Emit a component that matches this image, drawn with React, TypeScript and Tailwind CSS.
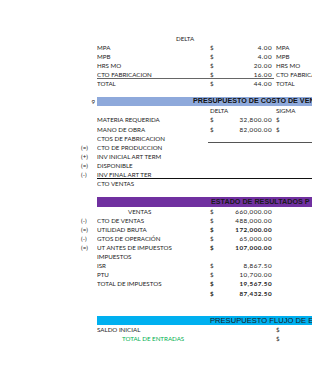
import React from "react";

type RowProps = {
  pre?: string;
  label?: React.ReactNode;
  cur?: string;
  num?: string;
  rest?: React.ReactNode;
  bold?: boolean;
  labelClass?: string;
  curClass?: string;
  numClass?: string;
  restClass?: string;
  preClass?: string;
};

const cell = "h-[9.12px] leading-[9.12px] whitespace-nowrap overflow-hidden";

const Row = ({
  pre,
  label,
  cur,
  num,
  rest,
  bold,
  labelClass = "",
  curClass = "",
  numClass = "",
  restClass = "",
  preClass = "pl-[81px]",
}: RowProps) => (
  <div className="grid grid-cols-[97px_111px_10px_56px_1fr]">
    <div className={`${cell} ${preClass}`}>{pre}</div>
    <div className={`${cell} ${labelClass}`}>{label}</div>
    <div className={`${cell} pl-[2px] ${bold ? "font-bold" : ""} ${curClass}`}>{cur}</div>
    <div
      className={`${cell} text-right pr-[2px] text-[6.3px] tracking-[0.45px] ${bold ? "font-bold" : ""} ${numClass}`}
    >
      {num}
    </div>
    <div className={`${cell} pl-[2px] ${restClass}`}>{rest}</div>
  </div>
);

const Blank = () => <div className="h-[9.12px]" />;

export default function App() {
  return (
    <div
      className="w-[312px] h-[380px] overflow-hidden bg-white text-[#1c1c1c] text-[6.2px] pt-[33.5px]"
      style={{ fontFamily: "Lato, 'Liberation Sans', sans-serif" }}
    >
      {/* costo de fabricacion */}
      <Row label={<span className="pl-[79px]">DELTA</span>} />
      <Row label="MPA" cur="$" num="4.00" rest="MPA" />
      <Row label="MPB" cur="$" num="4.00" rest="MPB" />
      <Row label="HRS MO" cur="$" num="20.00" rest="HRS MO" />
      <Row
        label="CTO FABRICACION"
        cur="$"
        num="16.00"
        rest="CTO FABRICA"
        labelClass="border-b border-[#666]"
        curClass="border-b border-[#666]"
        numClass="border-b border-[#666]"
      />
      <Row label="TOTAL" cur="$" num="44.00" rest="TOTAL" />
      <Blank />

      {/* costo de ventas */}
      <div className="grid grid-cols-[97px_1fr]">
        <div className={`${cell} text-right pr-[2px]`}>9</div>
        <div
          className={`${cell} bg-[#8ea9db] pl-[96px] font-bold text-[7.15px] text-[#111]`}
          style={{ fontFamily: "'Liberation Sans', Lato, sans-serif" }}
        >
          PRESUPUESTO DE COSTO DE VEN
        </div>
      </div>
      <Row cur="DELTA" curClass="overflow-visible" rest="SIGMA" />
      <Row label="MATERIA REQUERIDA" cur="$" num="32,800.00" rest="$" />
      <Row label="MANO DE OBRA" cur="$" num="82,000.00" rest="$" />
      <Row
        label="CTOS DE FABRICACION"
        curClass="border-b border-[#555]"
        numClass="border-b border-[#555]"
        restClass="border-b border-[#555]"
      />
      <Row pre="(=)" label="CTO DE PRODUCCION" />
      <Row pre="(+)" label="INV INICIAL ART TERM" />
      <Row pre="(=)" label="DISPONIBLE" />
      <Row
        pre="(-)"
        label="INV FINAL ART TER"
        labelClass="border-b border-[#111]"
        curClass="border-b border-[#111]"
        numClass="border-b border-[#111]"
        restClass="border-b border-[#111]"
      />
      <Row label="CTO VENTAS" />
      <Blank />

      {/* estado de resultados */}
      <div className="grid grid-cols-[97px_1fr]">
        <div className={cell} />
        <div
          className={`${cell} bg-[#7030a0] pl-[114px] font-bold text-[7.2px] text-[#1a1a1a]`}
          style={{ fontFamily: "'Liberation Sans', sans-serif" }}
        >
          ESTADO DE RESULTADOS P
        </div>
      </div>
      <Row label={<span className="pl-[31px]">VENTAS</span>} cur="$" num="660,000.00" />
      <Row pre="(-)" label="CTO DE VENTAS" cur="$" num="488,000.00" />
      <Row pre="(=)" label="UTILIDAD BRUTA" cur="$" num="172,000.00" bold />
      <Row pre="(-)" label="GTOS DE OPERACIÓN" cur="$" num="65,000.00" />
      <Row pre="(=)" label="UT ANTES DE IMPUESTOS" cur="$" num="107,000.00" bold />
      <Row label="IMPUESTOS" />
      <Row label="ISR" cur="$" num="8,867.50" />
      <Row label="PTU" cur="$" num="10,700.00" />
      <Row label="TOTAL DE IMPUESTOS" cur="$" num="19,567.50" bold />
      <Row cur="$" num="87,432.50" bold />
      <Blank />
      <Blank />

      {/* flujo de efectivo */}
      <div className="grid grid-cols-[97px_1fr]">
        <div className={cell} />
        <div
          className={`${cell} bg-[#00b0f0] pl-[113px] text-[7.6px] text-[#1a1a1a]`}
          style={{ fontFamily: "'Liberation Sans', sans-serif" }}
        >
          PRESUPUESTO FLUJO DE E
        </div>
      </div>
      <Row label="SALDO INICIAL" rest="$" />
      <Row
        label={<span className="pl-[25px] text-[#00b050]">TOTAL DE ENTRADAS</span>}
        rest="$"
      />
    </div>
  );
}
